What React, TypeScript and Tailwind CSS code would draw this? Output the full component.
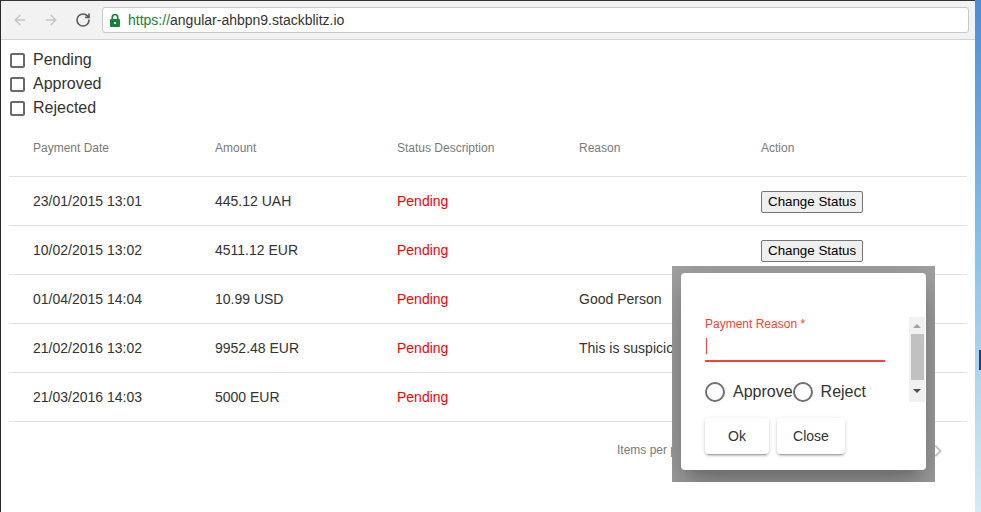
import { ArrowLeft, ArrowRight, RotateCw } from 'lucide-react';

const payments = [
  { date: '23/01/2015 13:01', amount: '445.12 UAH', status: 'Pending', reason: '', action: true },
  { date: '10/02/2015 13:02', amount: '4511.12 EUR', status: 'Pending', reason: '', action: true },
  { date: '01/04/2015 14:04', amount: '10.99 USD', status: 'Pending', reason: 'Good Person', action: false },
  { date: '21/02/2016 13:02', amount: '9952.48 EUR', status: 'Pending', reason: 'This is suspicious', action: false },
  { date: '21/03/2016 14:03', amount: '5000 EUR', status: 'Pending', reason: '', action: false },
];

const filters = ['Pending', 'Approved', 'Rejected'];
const columns = ['Payment Date', 'Amount', 'Status Description', 'Reason', 'Action'];

const LockIcon = () => (
  <svg width="10" height="14" viewBox="0 0 10 14">
    <path d="M2.3 6.5V4.2a2.7 2.7 0 0 1 5.4 0v2.3" stroke="#188038" strokeWidth="1.7" fill="none" />
    <rect x="0" y="6" width="10" height="8" rx="1" fill="#188038" />
    <circle cx="5" cy="10" r="1.1" fill="#fff" />
  </svg>
);

const BrowserBar = () => (
  <div className="h-[40px] shrink-0 flex items-center bg-[#f2f2f2] border-t border-t-[#333] border-b border-b-[#d2d2d2] pl-[11px]">
    <ArrowLeft size={16} strokeWidth={2} color="#c3c3c3" />
    <ArrowRight size={16} strokeWidth={2} color="#c3c3c3" className="ml-[15px]" />
    <RotateCw size={16} strokeWidth={2.4} color="#5a5a5a" className="ml-[16px]" />
    <div className="ml-[11px] w-[867px] h-[26px] flex items-center bg-white border border-[#c8c8c8] rounded-[3px] pl-[7px]">
      <LockIcon />
      <span className="ml-[8px] text-[14px] text-[#333]">
        <span className="text-[#188038]">https://</span>angular-ahbpn9.stackblitz.io
      </span>
    </div>
  </div>
);

const PaymentTable = () => (
  <div>
    <div className="h-[57px] flex items-center pl-[24px] border-b border-[#e0e0e0]">
      {columns.map((c) => (
        <div key={c} className="w-[182px] text-[12px] text-[#7a7a7a]">{c}</div>
      ))}
    </div>
    {payments.map((p) => (
      <div key={p.date} className="h-[49px] flex items-center pl-[24px] border-b border-[#e0e0e0] text-[14px] text-[#333]">
        <div className="w-[182px]">{p.date}</div>
        <div className="w-[182px]">{p.amount}</div>
        <div className="w-[182px] text-[#ff0000]">{p.status}</div>
        <div className="w-[182px] whitespace-nowrap">{p.reason}</div>
        <div className="w-[182px]">
          {p.action && (
            <button className="h-[22px] mt-[1px] px-[6px] text-[13.33px] leading-none bg-[#efefef] border border-[#767676] rounded-[2px] text-black">
              Change Status
            </button>
          )}
        </div>
      </div>
    ))}
    {/* paginator */}
    <div className="h-[56px] flex items-center">
      <span className="ml-[608px] text-[12px] text-[#7a7a7a]">Items per page:</span>
      <svg width="24" height="24" viewBox="0 0 24 24" className="ml-auto mr-[17px] mt-[2px]">
        <path d="M10 6L8.59 7.41 13.17 12l-4.58 4.59L10 18l6-6z" fill="#c4c4c4" />
      </svg>
    </div>
  </div>
);

const StatusDialog = () => (
  <div className="absolute left-[672px] top-[266px] w-[263px] h-[216px] bg-[#a3a3a3] overflow-hidden">
    <div className="absolute left-[9px] top-[7px] w-[245px] h-[197px] bg-white rounded-[4px] shadow-[0_11px_15px_-7px_rgba(0,0,0,0.2),0_24px_38px_3px_rgba(0,0,0,0.14),0_9px_46px_8px_rgba(0,0,0,0.12)] flex flex-col">
      <div className="mt-[44px] h-[85px] flex">
        <div className="flex-1 pl-[24px] flex flex-col overflow-hidden">
          <div className="text-[12px] leading-[14px] text-[#f44336]">Payment Reason *</div>
          <div className="mt-[7px] ml-[1px] h-[16px] w-[1px] bg-[#f44336]" />
          <div className="mt-[6px] h-[2px] w-[180px] bg-[#f44336]" />
          <div className="mt-[20px] h-[20px] flex items-center text-[16px] text-[#333] whitespace-nowrap">
            <div className="w-[20px] h-[20px] shrink-0 rounded-full border-2 border-[#717171]" />
            <span className="ml-[8px]">Approve</span>
            <div className="w-[20px] h-[20px] shrink-0 rounded-full border-2 border-[#717171]" />
            <span className="ml-[8px]">Reject</span>
          </div>
        </div>
        <div className="w-[16px] mr-[1px] bg-[#f1f1f1] flex flex-col">
          <div className="h-[17px] flex items-center justify-center">
            <div className="w-0 h-0 border-x-[4px] border-x-transparent border-b-[4px] border-b-[#a3a3a3]" />
          </div>
          <div className="h-[46px] ml-[2px] mr-[1px] bg-[#c1c1c1]" />
          <div className="flex-1 flex items-center justify-center">
            <div className="w-0 h-0 border-x-[4px] border-x-transparent border-t-[4px] border-t-[#505050]" />
          </div>
        </div>
      </div>
      <div className="mt-[16px] pl-[24px] flex gap-[8px]">
        {['Ok', 'Close'].map((label) => (
          <button
            key={label}
            className={`${label === 'Ok' ? 'w-[64px]' : 'w-[68px]'} h-[36px] bg-white rounded-[4px] text-[14px] text-[#333] shadow-[0_3px_1px_-2px_rgba(0,0,0,0.2),0_2px_2px_0_rgba(0,0,0,0.14),0_1px_5px_0_rgba(0,0,0,0.12)]`}
          >
            {label}
          </button>
        ))}
      </div>
    </div>
  </div>
);

export default function App() {
  return (
    <div className="relative w-[981px] h-[512px] flex overflow-hidden bg-white font-['Liberation_Sans',Arial,sans-serif]">
      <div className="w-[975px] h-full flex flex-col border-l border-[#2b2b2b]">
        <BrowserBar />
        <div className="px-[8px]">
          {/* Status filters */}
          <div className="pt-[8px]">
            {filters.map((f) => (
              <div key={f} className="h-[24px] flex items-center">
                <div className="ml-[1px] w-[15px] h-[15px] border-2 border-[#6b6b6b] rounded-[2px]" />
                <span className="ml-[8px] text-[16px] text-[#333]">{f}</span>
              </div>
            ))}
          </div>
          <PaymentTable />
        </div>
      </div>
      {/* desktop behind the window */}
      <div className="w-[6px] h-full bg-linear-to-b from-[#4a8cd8] via-[#8cc3ea] to-[#d6ebf1] flex flex-col">
        <div className="mt-[350px] ml-[4px] w-[2px] h-[20px] bg-[#1c3d91]" />
      </div>
      <StatusDialog />
    </div>
  );
}
